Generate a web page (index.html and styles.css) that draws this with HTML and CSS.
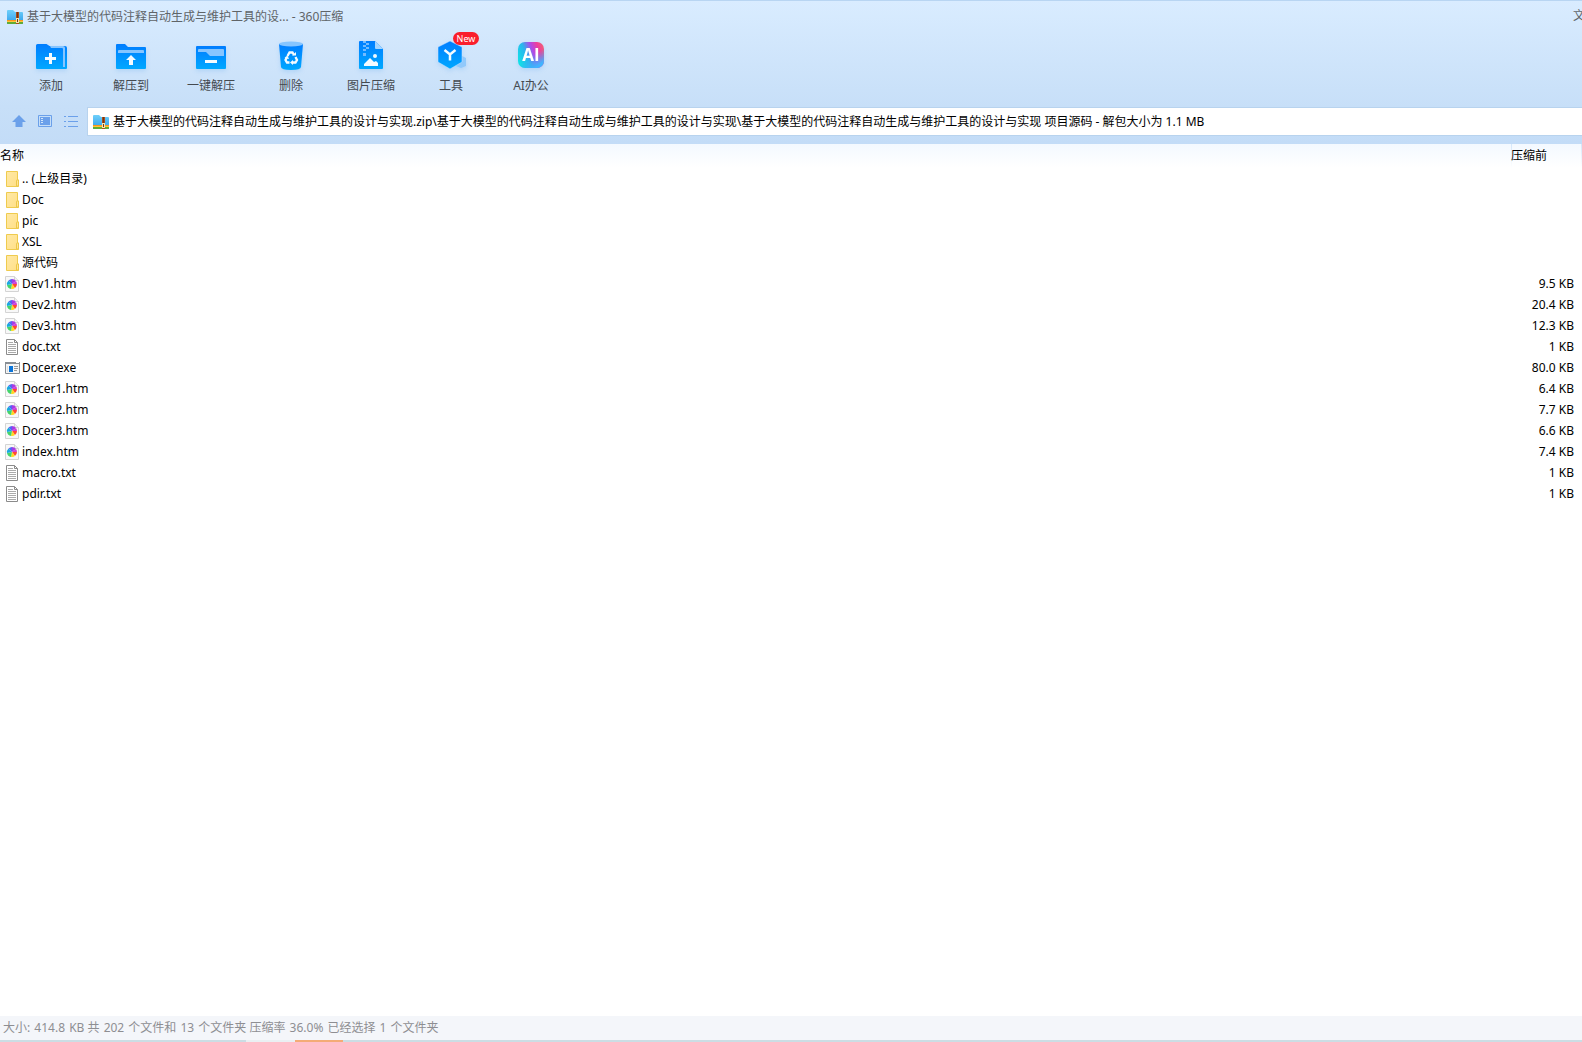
FILE: index.html
```html
<!DOCTYPE html>
<html lang="zh-CN">
<head>
<meta charset="utf-8">
<meta name="viewport" content="width=device-width, initial-scale=1">
<title>360压缩</title>
<link rel="stylesheet" href="styles.css">
</head>
<body>
<svg class="defs" aria-hidden="true">
  <defs>
    <linearGradient id="blue" x1="0" y1="0" x2="0" y2="1"><stop offset="0" stop-color="#007dff"/><stop offset="1" stop-color="#00a8ff"/></linearGradient>
    <linearGradient id="sky" x1="0" y1="0" x2="0" y2="1"><stop offset="0" stop-color="#6fd0fa"/><stop offset="1" stop-color="#2d9bea"/></linearGradient>
    <linearGradient id="ai" x1="0" y1="0.7" x2="1" y2="0.3"><stop offset="0" stop-color="#12e0e6"/><stop offset="0.35" stop-color="#2bb5ee"/><stop offset="0.62" stop-color="#b04ae8"/><stop offset="0.85" stop-color="#f0409a"/><stop offset="1" stop-color="#f05a7c"/></linearGradient>
    <linearGradient id="aiFoot" x1="0.3" y1="0.3" x2="0.8" y2="1"><stop offset="0.4" stop-color="#40a8f8" stop-opacity="0"/><stop offset="0.9" stop-color="#40b4ff"/></linearGradient>
    <linearGradient id="yellow" x1="0" y1="0" x2="1" y2="1"><stop offset="0" stop-color="#ffe9a6"/><stop offset="1" stop-color="#ffdf86"/></linearGradient>
  </defs>
  <symbol id="archive" viewBox="0 0 16 14">
    <path d="M0 1q0-1 1-1h5l2 2h7q1 0 1 1v11H0z" fill="url(#sky)"/>
    <path d="M0 10h16v2H0z" fill="#f8971c"/><path d="M0 12h16v1q0 1-1 1H1q-1 0-1-1z" fill="#62ac35"/>
    <path d="M0 11h16v1H0z" fill="#ffc43c"/>
    <path d="M9 2h3v12H9z" fill="#a8501a"/><path d="M10 2h1v7h-1z" fill="#7a3010"/>
    <path d="M9 8h3v5H9z" fill="#f7e3ae"/><path d="M10 9h1v3h-1z" fill="#6b3a1a"/>
  </symbol>
  <symbol id="folder" viewBox="0 0 16 16">
    <path d="M1.500.5h11v8.500h1v6.500h-12z" fill="url(#yellow)" stroke="#efcb4e"/>
    <path d="M11.500 15V9.500q0-.5.5-.5h1.500v6z" fill="#ffe596" stroke="#ecc748"/>
  </symbol>
  <symbol id="htm" viewBox="0 0 16 16">
    <path d="M.5.500h9l4 4v11H.5z" fill="#f8f8f8" stroke="#d4d4d4"/><path d="M9.500.5v4h4" fill="#eee" stroke="#d4d4d4"/>
    <path d="M7 8V3a5 5 0 0 1 4 2z" fill="#a43be6"/><path d="M7 8l4-3a5 5 0 0 1 1 3z" fill="#d03fd0"/>
    <path d="M7 8h5a5 5 0 0 1-2 4z" fill="#ff4a30"/><path d="M7 8l3 4a5 5 0 0 1-4 1z" fill="#ffd91c"/>
    <path d="M7 8l-1 5a5 5 0 0 1-4-4z" fill="#45d46b"/><path d="M7 8L2 9a5 5 0 0 1 1.500-4.500z" fill="#18a8e0"/>
    <path d="M7 8L3.500 4.500A5 5 0 0 1 7 3z" fill="#5565f2"/>
  </symbol>
  <symbol id="txt" viewBox="0 0 16 16">
    <path d="M1.500.5h8l3 3v12h-11z" fill="#fff" stroke="#8b8b8b"/><path d="M9.500.5v3h3" fill="none" stroke="#8b8b8b"/>
    <path d="M3 3.500h5M3 5.500h8M3 7.500h8M3 9.500h8M3 11.500h8M3 13.500h8" stroke="#aaa"/>
  </symbol>
  <symbol id="exe" viewBox="0 0 16 16">
    <path d="M.5 2.500h14v11H.5z" fill="#f5f5f5" stroke="#888e94"/><path d="M0 2h15v2H0z" fill="#888e94"/><path d="M11 2.500h3" stroke="#fff"/>
    <path d="M4 6h4v6H4z" fill="#0a74d8"/><path d="M2 6h1v6H2z" fill="#ddd"/><path d="M9 6.500h4M9 8.500h4M9 10.500h3" stroke="#999"/>
  </symbol>
</svg>

<header class="titlebar">
  <svg class="app-icon" aria-hidden="true"><use href="#archive"/></svg>
  <h1 class="title">基于大模型的代码注释自动生成与维护工具的设... - 360压缩</h1>
  <button class="menu" type="button">文</button>
</header>

<nav class="toolbar" aria-label="工具栏">
  <button class="tool" type="button">
    <svg viewBox="-1 0 32 32" aria-hidden="true"><path d="M0 5.500Q0 4 1.500 4h9l3 2H29q2 0 2 2v20q0 1-1 1H1q-1 0-1-1z" fill="url(#blue)"/><path d="M14 6h13q2 0 2 2v19h-2V9q0-1-1-1H15z" fill="#86c5ff"/><path d="M9 18.500h11M14.500 13v11" stroke="#f4fbff" stroke-width="3"/></svg>
    <span>添加</span></button>
  <button class="tool" type="button">
    <svg viewBox="0 0 32 32" aria-hidden="true"><path d="M1 5q0-1 1-1h8l3 3h17q1 0 1 1v20q0 1-1 1H2q-1 0-1-1z" fill="url(#blue)"/><path d="M3 13v-2q0-1 1-1h24q1 0 1 1v2z" fill="#86c5ff"/><path d="M16 15l5 5h-3v5h-4v-5h-3z" fill="#f4fbff"/></svg>
    <span>解压到</span></button>
  <button class="tool" type="button">
    <svg viewBox="0 0 32 32" aria-hidden="true"><path d="M1 7q0-1 1-1h28q1 0 1 1v21q0 1-1 1H2q-1 0-1-1z" fill="url(#blue)"/><path d="M3 12v-2q0-1 1-1h24q1 0 1 1v6H15l-4-4z" fill="#86c5ff"/><path d="M10 21.500h12" stroke="#f4fbff" stroke-width="3"/></svg>
    <span>一键解压</span></button>
  <button class="tool" type="button">
    <svg viewBox="0 0 32 32" aria-hidden="true"><path d="M4 4h24l-2 23q-.3 3-10 3t-10-3z" fill="url(#blue)"/><ellipse cx="16" cy="4" rx="12" ry="2.500" fill="#86c5ff"/>
    <g fill="none" stroke="#f4fbff" stroke-width="2.300"><path d="M12.500 16l2-3.500h3l1.500 2.500M20.500 17l1.500 3-1.500 2.500H17M14.500 22.500H12L10.500 20l1.500-3"/></g><path d="M17 15.500h4V12zM18 20v5l-3-2.500zM9.500 18l3-2.500 1.500 3.500z" fill="#f4fbff"/></svg>
    <span>删除</span></button>
  <button class="tool" type="button">
    <svg viewBox="0 0 32 32" aria-hidden="true"><path d="M4 2q0-1 1-1h15l8 8v19q0 1-1 1H5q-1 0-1-1z" fill="url(#blue)"/><path d="M20 1l8 8h-7q-1 0-1-1z" fill="#a5d5ff"/><path d="M8 1h3v2h3v2h-3v2h3v2h-3v2H8V9h3V7H8V5h3V3H8z" fill="#74bbff"/><path d="M8 13h3v3H8z" fill="#74bbff"/><circle cx="20" cy="16" r="2" fill="#eef9ff"/><path d="M9 26v-2l6-6 4 4 2-1 2 2v3z" fill="#f4fbff"/></svg>
    <span>图片压缩</span></button>
  <button class="tool" type="button">
    <svg viewBox="-1 0 32 32" aria-hidden="true"><path d="M24 15l6 3v8l-5 2-5-2z" fill="#91c9fb"/><path d="M14 1l12 6v15l-12 7-12-7V7z" fill="url(#blue)" stroke="#d0e5fc" stroke-width=".5"/><path d="M8.500 10l5.500 4.500 5.500-4.500M14 14v6.500" fill="none" stroke="#f4fbff" stroke-width="2.500"/></svg>
    <span>工具</span><em class="badge">New</em></button>
  <button class="tool" type="button">
    <svg viewBox="0 0 32 32" aria-hidden="true"><rect x="3" y="2" width="26" height="26" rx="7" fill="url(#ai)"/><rect x="3" y="2" width="26" height="26" rx="7" fill="url(#aiFoot)"/><text class="ai-mark" x="16" y="21">AI</text></svg>
    <span>AI办公</span></button>
</nav>

<form class="addressbar">
  <button class="nav" type="button" aria-label="上级目录"><svg viewBox="0 0 14 14" aria-hidden="true"><path d="M7 1l7 7h-3.500v5h-7V8H0z" fill="#6ba0ea"/></svg></button>
  <button class="nav" type="button" aria-label="视图"><svg viewBox="0 0 14 14" aria-hidden="true"><path d="M.5 1.500h13v11H.5z" fill="none" stroke="#6ba0ea"/><path d="M2 3h10v8H2z" fill="#6ba0ea"/><path d="M3 4.500h2M3 6.500h2M3 8.500h2" stroke="#d2e5fb"/></svg></button>
  <button class="nav" type="button" aria-label="列表"><svg viewBox="0 0 14 14" aria-hidden="true"><path d="M0 2.500h2M0 7.500h2M0 12.500h2M4 2.500h10M4 7.500h10M4 12.500h10" stroke="#6ba0ea"/></svg></button>
  <label class="path"><svg class="app-icon" aria-hidden="true"><use href="#archive"/></svg>
    <input type="text" aria-label="路径" value="基于大模型的代码注释自动生成与维护工具的设计与实现.zip\基于大模型的代码注释自动生成与维护工具的设计与实现\基于大模型的代码注释自动生成与维护工具的设计与实现 项目源码 - 解包大小为 1.1 MB"></label>
</form>

<main class="files">
  <table>
    <thead><tr><th scope="col">名称</th><th scope="col" class="size">压缩前</th><th class="edge"></th></tr></thead>
    <tbody>
      <tr><td><svg><use href="#folder"/></svg>.. (上级目录)</td><td></td></tr>
      <tr><td><svg><use href="#folder"/></svg>Doc</td><td></td></tr>
      <tr><td><svg><use href="#folder"/></svg>pic</td><td></td></tr>
      <tr><td><svg><use href="#folder"/></svg>XSL</td><td></td></tr>
      <tr><td><svg><use href="#folder"/></svg>源代码</td><td></td></tr>
      <tr><td><svg><use href="#htm"/></svg>Dev1.htm</td><td>9.5 KB</td></tr>
      <tr><td><svg><use href="#htm"/></svg>Dev2.htm</td><td>20.4 KB</td></tr>
      <tr><td><svg><use href="#htm"/></svg>Dev3.htm</td><td>12.3 KB</td></tr>
      <tr><td><svg><use href="#txt"/></svg>doc.txt</td><td>1 KB</td></tr>
      <tr><td><svg><use href="#exe"/></svg>Docer.exe</td><td>80.0 KB</td></tr>
      <tr><td><svg><use href="#htm"/></svg>Docer1.htm</td><td>6.4 KB</td></tr>
      <tr><td><svg><use href="#htm"/></svg>Docer2.htm</td><td>7.7 KB</td></tr>
      <tr><td><svg><use href="#htm"/></svg>Docer3.htm</td><td>6.6 KB</td></tr>
      <tr><td><svg><use href="#htm"/></svg>index.htm</td><td>7.4 KB</td></tr>
      <tr><td><svg><use href="#txt"/></svg>macro.txt</td><td>1 KB</td></tr>
      <tr><td><svg><use href="#txt"/></svg>pdir.txt</td><td>1 KB</td></tr>
    </tbody>
  </table>
</main>

<footer class="status">大小: <b>414.8</b> KB 共 <b>202</b> 个文件和 <b>13</b> 个文件夹 压缩率 <b>36.0%</b> 已经选择 <b>1</b> 个文件夹</footer>
<div class="taskbar"><i></i><i></i><i></i><i></i></div>
</body>
</html>
```
FILE: styles.css
```css
* { box-sizing: border-box; }

body {
  margin: 0;
  min-height: 100vh;
  display: flex;
  flex-direction: column;
  overflow-x: hidden;
  font: 12px/20px "Noto Sans", "Noto Sans CJK SC", sans-serif;
  color: #000;
  background: linear-gradient(#d9ecff, #c7dff8 107px, #c3dcf7 144px, #fff 144px);
}

button, input { font: inherit; color: inherit; }
button { border: 0; padding: 0; background: none; }
.defs { position: absolute; width: 0; height: 0; }
.app-icon { width: 16px; height: 14px; flex: none; }

.titlebar {
  display: flex;
  align-items: center;
  gap: 4px;
  height: 32px;
  padding-left: 7px;
  border-top: 1px solid #b8d5f2;
  color: #5f6468;
  overflow: hidden;
}
.title { margin: 0; font-size: 12px; font-weight: 400; white-space: nowrap; }
.menu { flex: none; margin-left: auto; margin-right: -3px; padding-bottom: 2px; }

.toolbar { display: flex; height: 75px; padding: 8px 0 0 11px; }
.tool {
  position: relative;
  width: 80px;
  display: flex;
  flex-direction: column;
  align-items: center;
  gap: 4px;
  color: #444a50;
}
.tool svg { width: 32px; height: 32px; filter: drop-shadow(0 2px 2px #5aa8f040); }
.ai-mark { font: 700 17px "Open Sans", sans-serif; fill: #fff; text-anchor: middle; }
.badge {
  position: absolute;
  left: 42px;
  top: -8px;
  width: 26px;
  border-radius: 7px;
  background: #fa1e2c;
  color: #fff;
  font: 9px/13px "Noto Sans", sans-serif;
  text-align: center;
}

.addressbar { display: flex; align-items: flex-start; height: 37px; padding-left: 12px; }
.nav { width: 26px; height: 28px; }
.nav svg { display: block; width: 14px; height: 14px; }
.path {
  flex: 1;
  display: flex;
  align-items: center;
  gap: 4px;
  height: 29px;
  margin-left: -3px;
  padding-left: 5px;
  background: #fff;
  border: solid #b8d3ee;
  border-width: 1px 0 1px 1px;
}
.path input { flex: 1; min-width: 0; padding: 0; border: 0; outline: 0; background: none; }

.files { flex: 1; background: #fff; }
table { width: 100%; border-collapse: collapse; table-layout: fixed; }
th {
  height: 24px;
  padding: 0;
  text-align: left;
  font-weight: 400;
  background: linear-gradient(#f3f9ff, #fff);
}
.size {
  width: 70px;
  background:
    linear-gradient(#d4e7fa, #fff) left / 1px 100% no-repeat,
    linear-gradient(#f3f9ff, #fff);
}
.edge { width: 1px; background: linear-gradient(#d4e7fa, #fff); }
td { height: 21px; padding: 0; white-space: nowrap; }
td:first-child { padding-left: 5px; }
td:last-child { padding-right: 7px; text-align: right; }
td svg { display: inline-block; width: 16px; height: 16px; margin-right: 1px; vertical-align: middle; }

.status { height: 24px; padding-left: 3px; line-height: 24px; color: #8e8e92; background: #f4f6fa; }
.status b { margin: 0 1px; font-weight: 400; }
.taskbar { display: grid; grid-template-columns: 246px 49px 48px 1fr; height: 2px; background: #cbdde4; }
.taskbar i:nth-child(2) { background: #eaf0f3; }
.taskbar i:nth-child(3) { background: #f4ab76; }
```
